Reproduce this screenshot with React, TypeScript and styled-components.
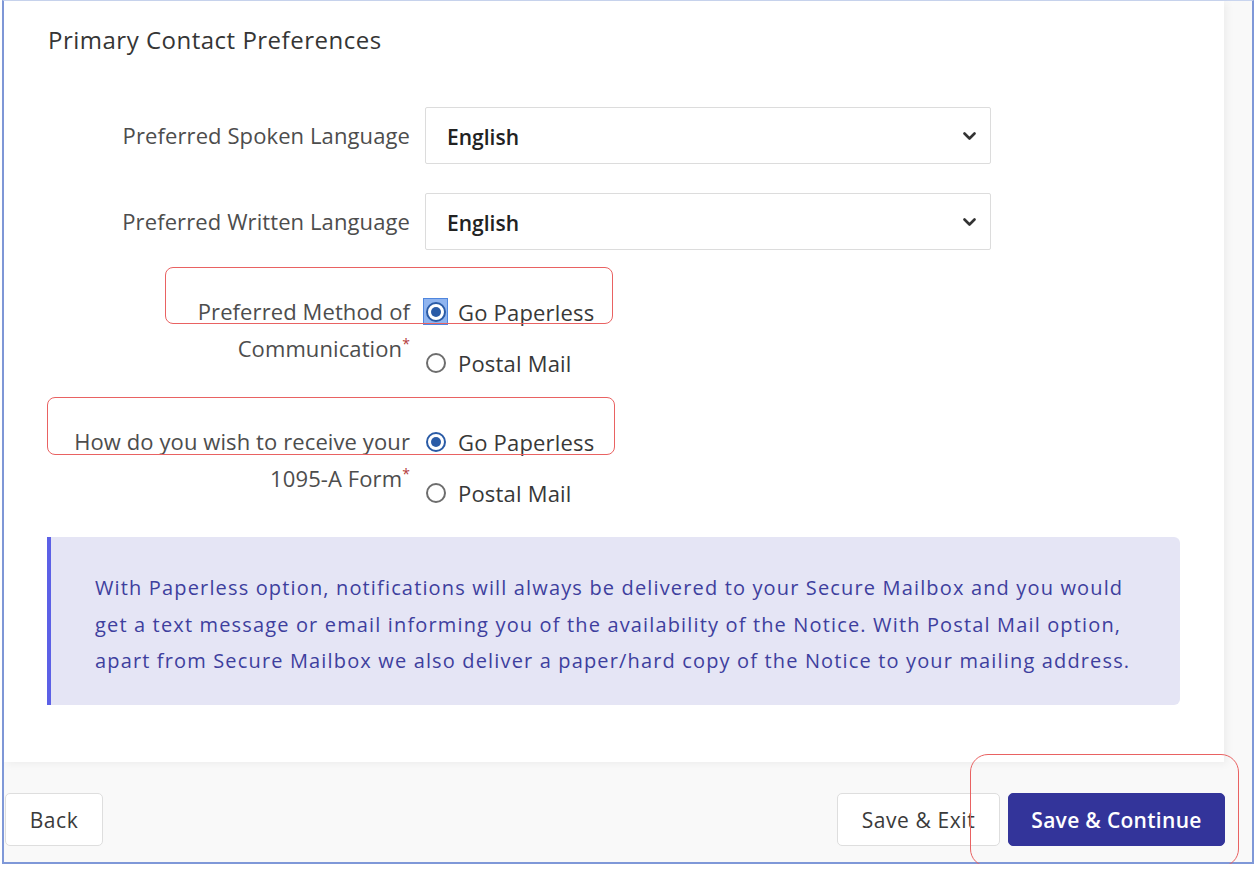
import React from 'react'
import styled, { createGlobalStyle } from 'styled-components'

const GlobalStyle = createGlobalStyle`
  html, body {
    margin: 0;
    padding: 0;
    background: #ffffff;
  }
  body {
    font-family: 'Open Sans', 'Liberation Sans', sans-serif;
    color: #333;
  }
`

const Frame = styled.div`
  position: relative;
  box-sizing: border-box;
  margin-left: 2px;
  width: 1252px;
  height: 864px;
  border-left: 2px solid #7f98d8;
  border-right: 2px solid #7f98d8;
  border-bottom: 2px solid #7f98d8;
  border-top: 1px solid #c9d5ef;
  background: #f9f9f9;
  display: flex;
  flex-direction: column;
`

const Card = styled.section`
  box-sizing: border-box;
  width: 1220px;
  height: 761px;
  background: #ffffff;
  box-shadow: 3px 2px 8px rgba(0, 0, 0, 0.05);
  padding-top: 25px;
`

const Title = styled.h2`
  margin: 0 0 53px 44px;
  font-size: 24px;
  line-height: 28px;
  font-weight: 500;
  letter-spacing: 0.5px;
  color: #353535;
`

const FieldRow = styled.div<{ $gap: number }>`
  display: grid;
  grid-template-columns: 406px 566px;
  column-gap: 15px;
  align-items: center;
  margin-bottom: ${(p) => p.$gap}px;
`

const RadioRow = styled(FieldRow)`
  align-items: start;
`

const Label = styled.div`
  text-align: right;
  font-size: 22px;
  line-height: 37px;
  font-weight: 500;
  letter-spacing: 0.1px;
  color: #4d4d4d;
  white-space: nowrap;
`

const Req = styled.span`
  color: #b33a3a;
  font-size: 14px;
  vertical-align: top;
  position: relative;
  top: -5px;
`

const SelectBox = styled.div`
  box-sizing: border-box;
  height: 57px;
  border: 1.5px solid #dcdcdc;
  border-radius: 2px;
  display: flex;
  align-items: center;
  justify-content: space-between;
  padding: 2px 14px 0 21px;
  font-size: 21px;
  font-weight: 600;
  color: #222;
  background: #fff;
`

const Options = styled.div`
  display: flex;
  flex-direction: column;
  gap: 14px;
`

const Option = styled.label`
  display: flex;
  align-items: center;
  gap: 13px;
  height: 37px;
  font-size: 22px;
  font-weight: 500;
  letter-spacing: 0.2px;
  color: #383838;
`

const RadioWrap = styled.span<{ $focus?: boolean }>`
  box-sizing: border-box;
  width: 25px;
  height: 27px;
  margin-left: -2px;
  margin-right: -3px;
  display: flex;
  align-items: center;
  justify-content: center;
  background: ${(p) => (p.$focus ? '#8fb4ef' : 'transparent')};
  border: ${(p) => (p.$focus ? '1px solid #4f86de' : '1px solid transparent')};
`

const Radio = styled.span<{ $checked?: boolean }>`
  box-sizing: border-box;
  width: 20px;
  height: 20px;
  border-radius: 50%;
  border: 2px solid ${(p) => (p.$checked ? '#2a5ba6' : '#6d6d6d')};
  background: #fff;
  display: flex;
  align-items: center;
  justify-content: center;

  &::after {
    content: '';
    width: 10px;
    height: 10px;
    border-radius: 50%;
    background: ${(p) => (p.$checked ? '#2a5ba6' : 'transparent')};
  }
`

const Notice = styled.div`
  box-sizing: border-box;
  margin: 26px 0 0 43px;
  width: 1133px;
  height: 168px;
  background: #e5e5f5;
  border-left: 4px solid #5c60e6;
  border-radius: 0 6px 6px 0;
  padding: 33px 0 0 44px;
  font-size: 20px;
  line-height: 36.5px;
  letter-spacing: 1.15px;
  font-weight: 500;
  white-space: nowrap;
  color: #3e3f9e;
`

const Footer = styled.footer`
  flex: 1;
  display: flex;
  justify-content: space-between;
  align-items: flex-start;
  padding: 31px 27px 0 1px;
`

const ButtonGroup = styled.div`
  display: flex;
  gap: 8px;
`

const Button = styled.button<{ $primary?: boolean; $w: number }>`
  box-sizing: border-box;
  width: ${(p) => p.$w}px;
  height: 53px;
  border-radius: 5px;
  border: 1.5px solid ${(p) => (p.$primary ? '#33349a' : '#dedede')};
  background: ${(p) => (p.$primary ? '#33349a' : '#ffffff')};
  color: ${(p) => (p.$primary ? '#ffffff' : '#3a3a3a')};
  font-family: inherit;
  font-size: 21px;
  letter-spacing: ${(p) => (p.$primary ? 0.3 : 0.6)}px;
  font-weight: ${(p) => (p.$primary ? 600 : 500)};
  padding: 0;
  cursor: pointer;
`

const Highlight = styled.div<{ $x: number; $y: number; $w: number; $h: number; $r?: number }>`
  position: absolute;
  left: ${(p) => p.$x}px;
  top: ${(p) => p.$y}px;
  width: ${(p) => p.$w}px;
  height: ${(p) => p.$h}px;
  box-sizing: border-box;
  border: 1.5px solid #e96262;
  border-radius: ${(p) => p.$r ?? 8}px;
  pointer-events: none;
`

const Chevron = () => (
  <svg width="13" height="9" viewBox="0 0 13 9">
    <path d="M1.5 1.5 L6.5 6.5 L11.5 1.5" fill="none" stroke="#333" strokeWidth="2.6" strokeLinecap="round" strokeLinejoin="round" />
  </svg>
)

const RadioOption = ({ text, checked, focus }: { text: string; checked?: boolean; focus?: boolean }) => (
  <Option>
    <RadioWrap $focus={focus}>
      <Radio $checked={checked} />
    </RadioWrap>
    {text}
  </Option>
)

const App = () => {
  return (
    <>
      <GlobalStyle />
      <Frame>
        <Card>
          <Title>Primary Contact Preferences</Title>

          <FieldRow $gap={29}>
            <Label>Preferred Spoken Language</Label>
            <SelectBox>
              English
              <Chevron />
            </SelectBox>
          </FieldRow>

          <FieldRow $gap={43}>
            <Label>Preferred Written Language</Label>
            <SelectBox>
              English
              <Chevron />
            </SelectBox>
          </FieldRow>

          <RadioRow $gap={42}>
            <Label>
              Preferred Method of
              <br />
              Communication<Req>*</Req>
            </Label>
            <Options>
              <RadioOption text="Go Paperless" checked focus />
              <RadioOption text="Postal Mail" />
            </Options>
          </RadioRow>

          <RadioRow $gap={0}>
            <Label>
              How do you wish to receive your
              <br />
              1095-A Form<Req>*</Req>
            </Label>
            <Options>
              <RadioOption text="Go Paperless" checked />
              <RadioOption text="Postal Mail" />
            </Options>
          </RadioRow>

          <Notice>
            With Paperless option, notifications will always be delivered to your Secure Mailbox and you would
            <br />
            get a text message or email informing you of the availability of the Notice. With Postal Mail option,
            <br />
            apart from Secure Mailbox we also deliver a paper/hard copy of the Notice to your mailing address.
          </Notice>
        </Card>

        <Footer>
          <Button $w={98}>Back</Button>
          <ButtonGroup>
            <Button $w={163}>Save &amp; Exit</Button>
            <Button $primary $w={217}>Save &amp; Continue</Button>
          </ButtonGroup>
        </Footer>

        <Highlight $x={161} $y={266} $w={448} $h={57} />
        <Highlight $x={43} $y={396} $w={568} $h={58} />
        <Highlight $x={966} $y={753} $w={269} $h={113} $r={18} />
      </Frame>
    </>
  )
}

export default App
